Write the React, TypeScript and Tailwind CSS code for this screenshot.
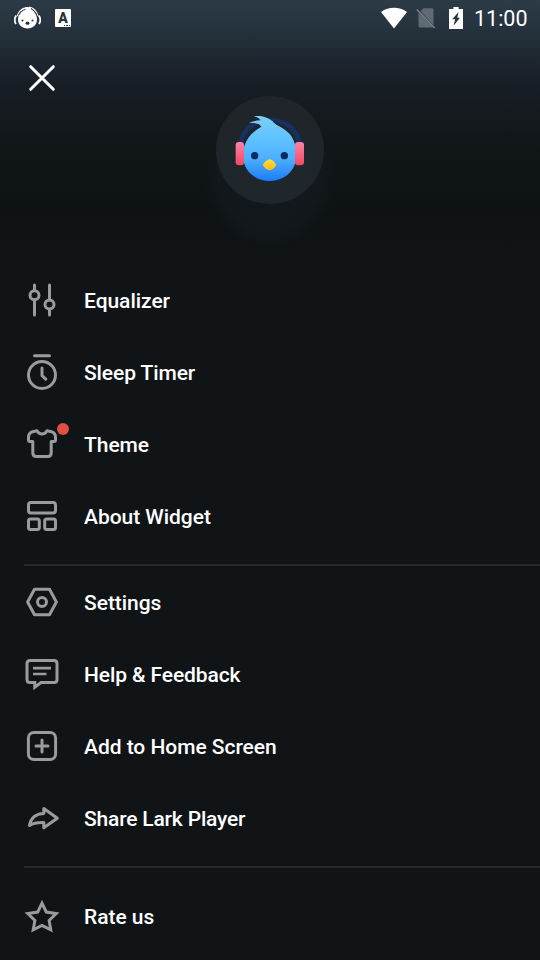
import React from "react"

interface MenuItem {
  label: string
  icon: React.ReactNode
  hasBadge?: boolean
  labelClassName?: string
}

const Glyph: React.FC<{ children: React.ReactNode }> = ({ children }) => (
  <svg
    viewBox="0 0 36 36"
    className="size-9"
    fill="none"
    stroke="currentColor"
    strokeWidth={3}
    strokeLinecap="round"
    strokeLinejoin="round"
  >
    {children}
  </svg>
)

const playerItems: MenuItem[] = [
  {
    label: "Equalizer",
    icon: (
      <Glyph>
        <path d="M10.5 3v5.5M10.5 18v15M25.5 3v15M25.5 27.5V33" />
        <circle cx="10.5" cy="13.3" r="4.5" />
        <circle cx="25.5" cy="22.6" r="4.5" />
      </Glyph>
    ),
  },
  {
    label: "Sleep Timer",
    labelClassName: "tracking-[-0.1px]",
    icon: (
      <Glyph>
        <path d="M10.5 1.7h15" />
        <circle cx="18" cy="21" r="13.5" />
        <path d="M18 14v7.6l3.8 3.6" />
      </Glyph>
    ),
  },
  {
    label: "Theme",
    hasBadge: true,
    icon: (
      <Glyph>
        <path d="M13 4.8C14.5 7 16 8 18 8S21.5 7 23 4.8L27.5 5.7C30.2 6.4 31.5 8.4 31.5 11.5V14C31.5 15 30.9 15.5 30 15.5H27.2V27C27.2 29.2 25.9 30.5 23.7 30.5H12.3C10.1 30.5 8.8 29.2 8.8 27V15.5H6C5.1 15.5 4.5 15 4.5 14V11.5C4.5 8.4 5.8 6.4 8.5 5.7Z" />
      </Glyph>
    ),
  },
  {
    label: "About Widget",
    icon: (
      <Glyph>
        <rect x="4.5" y="4.5" width="27" height="10.5" rx="2.5" />
        <rect x="4.5" y="21" width="10.8" height="10.5" rx="2" />
        <rect x="20.7" y="21" width="10.8" height="10.5" rx="2" />
      </Glyph>
    ),
  },
]

const appItems: MenuItem[] = [
  {
    label: "Settings",
    icon: (
      <Glyph>
        <path d="M3.6 18l6.9-12.8h15L32.4 18l-6.9 12.8h-15z" />
        <circle cx="18" cy="18" r="4.5" />
      </Glyph>
    ),
  },
  {
    label: "Help & Feedback",
    labelClassName: "tracking-[-0.1px]",
    icon: (
      <Glyph>
        <path d="M6 4.5h24c2 0 3 1 3 3v16c0 2-1 3-3 3H17l-6.2 4.7v-4.7H6c-2 0-3-1-3-3v-16c0-2 1-3 3-3z" strokeLinejoin="miter" />
        <path d="M9 12.2h18M9 18h13.5" strokeWidth="2.7" strokeLinecap="butt" />
      </Glyph>
    ),
  },
  {
    label: "Add to Home Screen",
    icon: (
      <Glyph>
        <rect x="4.4" y="4.4" width="27.2" height="27.2" rx="5.5" />
        <path d="M18 12v12M12 18h12" />
      </Glyph>
    ),
  },
  {
    label: "Share Lark Player",
    labelClassName: "tracking-[-0.18px]",
    icon: (
      <Glyph>
        <path d="M19.8 8.5L33.3 18.3 19.8 27.8V22.4C13.5 22.2 9 23 5.5 25.5 6.7 18.5 11 14 19.8 13.6z" />
      </Glyph>
    ),
  },
]

const extraItems: MenuItem[] = [
  {
    label: "Rate us",
    icon: (
      <Glyph>
        <path
          d="M18 5.2l4.3 8.9 9.9 1.4-7.1 6.9 1.7 9.4L18 27.4l-8.8 4.4 1.7-9.4-7.1-6.9 9.9-1.4z"
          strokeLinejoin="miter"
        />
      </Glyph>
    ),
  },
]

const MenuRow: React.FC<{ item: MenuItem }> = ({ item }) => (
  <li>
    <button className="flex h-18 w-full items-center gap-6 pl-6 text-left">
      <span className="relative text-[#999c9f]">
        {item.icon}
        {item.hasBadge && (
          <span className="absolute -top-[3px] -right-[9px] size-3 rounded-full bg-[#df4f44]" />
        )}
      </span>
      <span className={`pt-0.5 text-[21px] leading-6 font-medium text-white ${item.labelClassName ?? "tracking-[-0.04px]"}`}>
        {item.label}
      </span>
    </button>
  </li>
)

const MenuGroup: React.FC<{ items: MenuItem[] }> = ({ items }) => (
  <ul>
    {items.map((item) => (
      <MenuRow key={item.label} item={item} />
    ))}
  </ul>
)

const StatusBar = () => (
  <header className="flex h-9 items-center justify-between pr-3 pl-3.5 text-white">
    <div className="flex items-center gap-[14px]">
      {/* player notification */}
      <svg viewBox="0 0 27 24" className="h-6 w-[27px]">
        <path d="M2.3 9.5C.4 12 .4 15.500 2 18M24.700 9.500c1.900 2.500 1.900 6 .3 8.500" fill="none" stroke="white" strokeWidth="1.8" />
        <path d="M3.3 10C4.5 6 7 3.5 10 2.3M15 1.2c4.5.6 7.5 4 8.8 8.5" fill="none" stroke="white" strokeWidth="1.2" />
        <path d="M7.5 3.5C9.5 1.3 12 .5 15 1.3c3.8 2 8 6.5 8 12.2 0 5.2-4.2 9-9.500 9s-9.500-3.800-9.500-9C4 10 5.500 7 7.500 5z" fill="white" />
        <path d="M4.8 9C6.5 6 8.5 4.300 11.500 3.300M17 2.800c2.800 1.400 4.500 3.500 5.500 6" fill="none" stroke="#26333d" strokeWidth="1" />
        <circle cx="8.5" cy="14.5" r="1" fill="#26333d" />
        <circle cx="18.5" cy="14.5" r="1" fill="#26333d" />
        <ellipse cx="13.5" cy="17.2" rx="1.9" ry="1.6" fill="#26333d" />
      </svg>
      <span className="relative flex h-[18px] w-4 justify-center rounded-[1px] bg-white text-[14px] leading-[18px] font-black text-[#26333d]">
        A
        <span className="absolute right-px bottom-px flex gap-px">
          <i className="size-[1.5px] bg-[#26333d]" />
          <i className="size-[1.5px] bg-[#26333d]" />
          <i className="size-[1.5px] bg-[#26333d]" />
        </span>
      </span>
    </div>
    <div className="flex items-center">
      <svg viewBox="0 0 26 22" className="mr-[9px] h-[22px] w-[26px]" fill="white">
        <path d="M0 5C8-.6 18-.6 26 5L13 21.5z" />
      </svg>
      <svg viewBox="0 0 20 22" className="mr-[13px] h-[22px] w-5">
        <path d="M7.5 1.2H16c.9 0 1.500.6 1.500 1.500v15.500L4.500 4.200z" fill="#5f6a72" />
        <path d="M2.5 5.500l14.800 15H4c-.9 0-1.500-.6-1.500-1.500z" fill="#5f6a72" />
        <path d="M.8 2.5l17.900 18.500" stroke="#77818a" strokeWidth="1.5" />
      </svg>
      <svg viewBox="0 0 14 22" className="mr-[11px] h-[22px] w-3.5">
        <path d="M4.3 0h5.400v2H14v20H0V2h4.300z" fill="white" />
        <path d="M9.5 5L3.3 12.300h2.900L4.500 18.800 11 10.800H8.300z" fill="#26333d" />
      </svg>
      <span className="w-[54px] pt-0.5 text-[21.500px] leading-6">11:00</span>
    </div>
  </header>
)

// lark mascot wearing headphones
const LarkAvatar = () => (
  <svg viewBox="132 105 216 210" className="h-[70px] w-18">
    <defs>
      <linearGradient id="face" x1="0" y1="0" x2="0" y2="1">
        <stop offset="0" stopColor="#7dd0f6" />
        <stop offset="0.35" stopColor="#5fc2ff" />
        <stop offset="0.65" stopColor="#4eb0ff" />
        <stop offset="1" stopColor="#1b7dfb" />
      </linearGradient>
      <linearGradient id="ear" x1="0" y1="0" x2="0" y2="1">
        <stop offset="0" stopColor="#fb82a8" />
        <stop offset="1" stopColor="#f3485f" />
      </linearGradient>
      <linearGradient id="beak" x1="0" y1="0" x2="0" y2="1">
        <stop offset="0" stopColor="#ffe23c" />
        <stop offset="1" stopColor="#fdb813" />
      </linearGradient>
    </defs>
    <path d="M153 190C158 147 196 120 240 120S322 147 328 190" fill="none" stroke="#172f63" strokeWidth="14" />
    <path
      d="M189 109C210 105 234 111 248 124C252 130 258 134 266 138C277 143 288 151 297 160C312 176 319 200 319 226C319 272 284 303 239 303S159 272 159 226C159 202 168 180 184 163C192 154 202 147 214 140C209 131 195 127 176 130C187 124 198 121 212 121C207 114 200 110 189 109Z"
      fill="url(#face)"
    />
    <rect x="137" y="186" width="25" height="70" rx="9" fill="url(#ear)" />
    <rect x="315" y="186" width="27" height="70" rx="9" fill="url(#ear)" />
    <circle cx="194" cy="227" r="11" fill="#082c5c" />
    <circle cx="283" cy="227" r="11" fill="#082c5c" />
    <path d="M239 238C248 239 255 248 259 254C254 264 247 270 239 271C231 270 223 264 218 254C223 248 230 239 239 238Z" fill="url(#beak)" />
  </svg>
)

const Divider = () => <hr className="mt-3 ml-6 h-0.5 border-0 bg-[#25292c]" />

export default function App() {
  return (
    <div className="h-[960px] w-[540px] overflow-hidden bg-[#101417] bg-[linear-gradient(180deg,#2d3b47_0px,#263440_25px,#1d262f_60px,#181e26_85px,#141a1e_110px,#101618_150px,#0e1214_205px,#101417_270px)] font-[Roboto,sans-serif]">
      <StatusBar />
      <div className="flex h-[228px] flex-col">
        <button aria-label="Close" className="mt-6 ml-6 size-9">
          <svg viewBox="0 0 36 36" className="size-9" stroke="white" strokeWidth="3" strokeLinecap="round">
            <path d="M6.7 6.7l22.6 22.6M29.3 6.7L6.7 29.3" />
          </svg>
        </button>
        <div className="relative mx-auto flex size-27 items-center justify-center rounded-full bg-[#1f2529]">
          <div className="absolute top-5 -left-3 size-33 rounded-full bg-[radial-gradient(closest-side,#20303840_0%,#1d2a3038_75%,#1d2a3000_100%)]" />
          <div className="relative">
            <LarkAvatar />
          </div>
        </div>
      </div>
      <nav>
        <MenuGroup items={playerItems} />
        <Divider />
        <MenuGroup items={appItems} />
        <Divider />
        <div className="pt-3">
          <MenuGroup items={extraItems} />
        </div>
      </nav>
    </div>
  )
}
